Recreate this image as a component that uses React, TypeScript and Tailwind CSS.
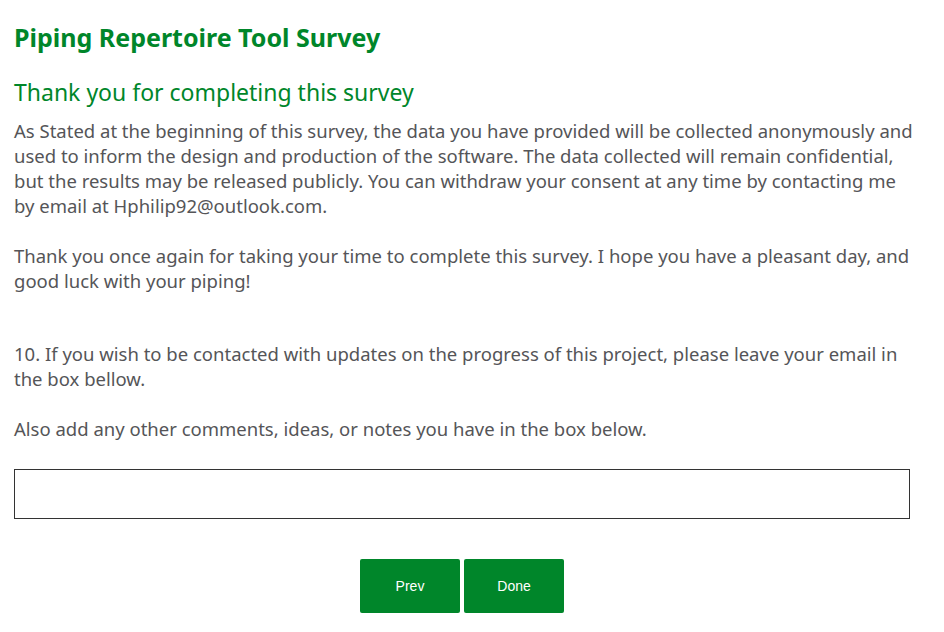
import React from "react";

export default function App() {
  return (
    <div className="w-[944px] h-[632px] bg-white overflow-hidden" style={{ fontFamily: '"Noto Sans", "Open Sans", sans-serif' }}>
      <div className="pl-[14px] pr-[30px]">
        <h1 className="pt-[20px] text-[25px] leading-[34px] font-bold text-[#00862a]">Piping Repertoire Tool Survey</h1>
        <h2 className="mt-[22px] text-[23px] leading-[32px] text-[#00862a]">Thank you for completing this survey</h2>
        <div className="mt-[10px] text-[18.5px] leading-[25px] text-[#555558]">
          <p>
            As Stated at the beginning of this survey, the data you have provided will be collected anonymously and used to inform the design and production of the software. The data collected will remain confidential, but the results may be released publicly. You can withdraw your consent at any time by contacting me by email at Hphilip92@outlook.com.
          </p>
          <p className="mt-[25px]">
            Thank you once again for taking your time to complete this survey. I hope you have a pleasant day, and good luck with your piping!
          </p>
          <p className="mt-[48px]">
            10. If you wish to be contacted with updates on the progress of this project, please leave your email in the box bellow.
          </p>
          <p className="mt-[25px]">Also add any other comments, ideas, or notes you have in the box below.</p>
        </div>
        <div className="mt-[28px] mr-[4px] h-[50px] border border-[#333] bg-white"></div>
        <div className="mt-[40px] flex justify-center gap-[4px] pr-[4px]">
          <button className="w-[100px] h-[54px] rounded-[2px] bg-[#00862a] text-white text-[14px]" style={{ fontFamily: '"Liberation Sans", Arial, sans-serif' }}>Prev</button>
          <button className="w-[100px] h-[54px] rounded-[2px] bg-[#00862a] text-white text-[14px]" style={{ fontFamily: '"Liberation Sans", Arial, sans-serif' }}>Done</button>
        </div>
      </div>
    </div>
  );
}
